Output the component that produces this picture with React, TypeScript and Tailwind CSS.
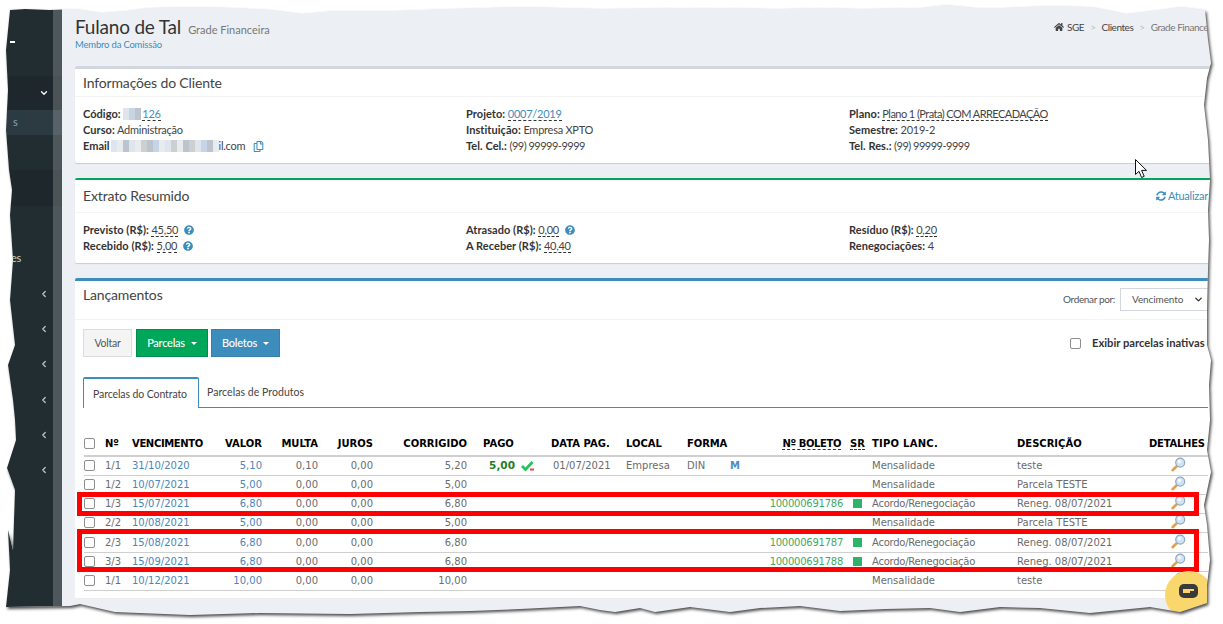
import React from "react";
import { ChevronDown, ChevronLeft } from "lucide-react";
import { FaHome, FaSyncAlt, FaQuestionCircle, FaRegCopy } from "react-icons/fa";

const edge =
  "10,10 25,9 50,10 75,9 100,13 125,11 147,8 190,7 233,8 270,10 300,14 333,11 393,11 450,9 520,7 600,9 700,8 780,9 820,8 860,9 920,8 945,5 975,8 1000,8 1050,6 1090,7 1125,14 1150,11 1180,7 1205,10 1208,40 1211,63 1207,78 1204,105 1208,140 1210,180 1208,210 1209,240 1208,270 1207,310 1207,345 1211,360 1209,385 1210,420 1207,450 1211,472 1204,505 1207,525 1210,560 1207,585 1207,603 1180,612 1150,607 1090,613 1040,608 1000,607 960,612 930,608 885,609 840,611 800,606 760,608 730,612 690,607 655,612 640,608 615,612 600,610 580,606 520,609 470,611 420,612 350,614 260,613 190,615 115,612 80,604 70,606 6,607 10,570 8,530 13,550 14,520 15,490 7,468 16,440 15,420 13,400 8,365 15,345 10,300 13,260 10,215 12,190 9,170 6,130 8,90 6,50";
const outside = `M0 0H1223V624H0Z M${edge.replace(/ /g, " L")}Z`;

function TornEdge() {
  return (
    <svg className="absolute inset-0 pointer-events-none" width="1223" height="624" viewBox="0 0 1223 624">
      <defs>
        <filter id="tornBlur" x="-5%" y="-5%" width="110%" height="110%">
          <feGaussianBlur stdDeviation="1.6" />
        </filter>
        <clipPath id="tornClip">
          <path d={outside} clipRule="evenodd" />
        </clipPath>
      </defs>
      <path d={outside} fill="#fff" fillRule="evenodd" />
      <g clipPath="url(#tornClip)">
        <polygon points={edge} fill="#4a4a4a" transform="translate(1.5 2)" filter="url(#tornBlur)" />
      </g>
    </svg>
  );
}

function Mosaic({ cells }: { cells: string[] }) {
  return (
    <span className="inline-flex h-[12px] align-[-2px] blur-[0.6px]">
      {cells.map((c, i) => (
        <span key={i} className={`w-[6px] h-full ${c}`} />
      ))}
    </span>
  );
}

const m1 = "bg-[#c6d5e6]";
const m2 = "bg-[#dfe5ec]";
const m3 = "bg-[#bcc4cd]";
const m4 = "bg-[#e9ecef]";
const m5 = "bg-[#cdcfd1]";

function Dashed({ children, blue, tight }: { children: React.ReactNode; blue?: boolean; tight?: boolean }) {
  return (
    <span className={`border-b border-dashed border-[#333] ${tight ? "tracking-[-0.55px]" : ""} ${blue ? "text-[#3c8dbc]" : "text-[#444]"}`}>{children}</span>
  );
}

function Field({ label, children }: { label: string; children: React.ReactNode }) {
  return (
    <div className="h-4 leading-4 whitespace-nowrap">
      <b className="font-bold text-[#333] tracking-[0.05px]">{label}</b> {children}
    </div>
  );
}

function Phone() {
  return <span className="tracking-[-0.5px]">(99) 99999-9999</span>;
}

function Help() {
  return <FaQuestionCircle className="inline ml-[6px] text-[#3c8dbc] align-[-1px]" size={10} />;
}

function Magnifier() {
  return (
    <svg width="15" height="15" viewBox="0 0 15 15" className="block mx-auto -translate-y-px">
      <path d="M6.2 8.8 L1.6 13.2" stroke="#e0a050" strokeWidth="2.6" strokeLinecap="round" />
      <circle cx="9.2" cy="5.6" r="4.5" fill="#cfe3f5" stroke="#8fa9bd" strokeWidth="1.2" />
      <circle cx="8.4" cy="4.6" r="1.8" fill="#f2f8fd" />
    </svg>
  );
}

function Check() {
  return <span className="block w-[11px] h-[11px] rounded-[2px] border border-[#8f8f8f] bg-white" />;
}

type Row = {
  h: string;
  n: string;
  v: string;
  val: string;
  mu: string;
  co: string;
  tipo: string;
  desc: string;
  boleto?: string;
  paid?: boolean;
};

const rows: Row[] = [
  { h: "h-[19px]", n: "1/1", v: "31/10/2020", val: "5,10", mu: "0,10", co: "5,20", tipo: "Mensalidade", desc: "teste", paid: true },
  { h: "h-[19px]", n: "1/2", v: "10/07/2021", val: "5,00", mu: "0,00", co: "5,00", tipo: "Mensalidade", desc: "Parcela TESTE" },
  { h: "h-[19px]", n: "1/3", v: "15/07/2021", val: "6,80", mu: "0,00", co: "6,80", tipo: "Acordo/Renegociação", desc: "Reneg. 08/07/2021", boleto: "100000691786" },
  { h: "h-[19px]", n: "2/2", v: "10/08/2021", val: "5,00", mu: "0,00", co: "5,00", tipo: "Mensalidade", desc: "Parcela TESTE" },
  { h: "h-[20px]", n: "2/3", v: "15/08/2021", val: "6,80", mu: "0,00", co: "6,80", tipo: "Acordo/Renegociação", desc: "Reneg. 08/07/2021", boleto: "100000691787" },
  { h: "h-[19px]", n: "3/3", v: "15/09/2021", val: "6,80", mu: "0,00", co: "6,80", tipo: "Acordo/Renegociação", desc: "Reneg. 08/07/2021", boleto: "100000691788" },
  { h: "h-[19px]", n: "1/1", v: "10/12/2021", val: "10,00", mu: "0,00", co: "10,00", tipo: "Mensalidade", desc: "teste" },
];

function Table() {
  const th = "p-0 font-bold text-black text-left whitespace-nowrap";
  return (
    <table className="table-fixed w-[1124px] border-collapse font-['DejaVu_Sans',sans-serif] text-[10px] text-[#6b6b6b] ml-px">
      <colgroup>
        <col className="w-[21px]" />
        <col className="w-[27px]" />
        <col className="w-[76px]" />
        <col className="w-[54px]" />
        <col className="w-[56px]" />
        <col className="w-[55px]" />
        <col className="w-[94px]" />
        <col className="w-[84px]" />
        <col className="w-[75px]" />
        <col className="w-[61px]" />
        <col className="w-[67px]" />
        <col className="w-[89px]" />
        <col className="w-[29px]" />
        <col className="w-[145px]" />
        <col className="w-[132px]" />
        <col className="w-[59px]" />
      </colgroup>
      <thead>
        <tr className="h-[24px] border-b-2 border-[#cfcfcf]">
          <th className={th}><Check /></th>
          <th className={th}>Nº</th>
          <th className={`${th} tracking-[-0.35px]`}>VENCIMENTO</th>
          <th className={`${th} !text-right`}>VALOR</th>
          <th className={`${th} !text-right`}>MULTA</th>
          <th className={`${th} !text-right`}>JUROS</th>
          <th className={`${th} !text-right`}>CORRIGIDO</th>
          <th className={`${th} pl-4`}>PAGO</th>
          <th className={th}>DATA PAG.</th>
          <th className={th}>LOCAL</th>
          <th className={`${th} tracking-[-0.1px]`}>FORMA</th>
          <th className={`${th} !text-right tracking-[-0.4px]`}>
            <span className="border-b border-dashed border-[#333] mr-[2px]">Nº BOLETO</span>
          </th>
          <th className={`${th} pl-[7px]`}>
            <span className="border-b border-dashed border-[#333]">SR</span>
          </th>
          <th className={`${th} tracking-[0.25px]`}>TIPO LANC.</th>
          <th className={th}>DESCRIÇÃO</th>
          <th className={`${th} tracking-[-0.25px]`}>DETALHES</th>
        </tr>
      </thead>
      <tbody>
        {rows.map((r, i) => (
          <tr key={i} className={`${r.h} border-b border-[#cfcfcf]`}>
            <td className="p-0"><Check /></td>
            <td className="p-0">{r.n}</td>
            <td className="p-0 text-[#4a86b8]">{r.v}</td>
            <td className="p-0 text-right text-[#4a86b8]">{r.val}</td>
            <td className="p-0 text-right">{r.mu}</td>
            <td className="p-0 text-right">0,00</td>
            <td className="p-0 text-right">{r.co}</td>
            <td className="p-0">
              {r.paid && (
                <span className="flex items-center">
                  <b className="w-[48px] text-right text-[#1e7d1e] text-[10.5px]">5,00</b>
                  <svg width="13" height="10" viewBox="0 0 13 10" className="ml-[6px]">
                    <path d="M1 5 L4.5 8.5 L11.5 1" fill="none" stroke="#22c55e" strokeWidth="2.8" />
                    <rect x="9" y="7.5" width="4" height="2" fill="#e5484d" />
                  </svg>
                </span>
              )}
            </td>
            <td className="p-0 pl-[2px]">{r.paid ? "01/07/2021" : ""}</td>
            <td className="p-0">{r.paid ? "Empresa" : ""}</td>
            <td className="p-0">
              {r.paid && (
                <span className="flex">
                  <span className="w-[43px]">DIN</span>
                  <b className="text-[#4a8ec0]">M</b>
                </span>
              )}
            </td>
            <td className="p-0 text-right text-[#3fa866] tracking-[-0.25px]">{r.boleto}</td>
            <td className="p-0 pl-[10px]">
              {r.boleto && <span className="block w-[9px] h-[9px] bg-[#2fb36a]" />}
            </td>
            <td className={`p-0 whitespace-nowrap ${r.boleto ? "tracking-[-0.25px]" : ""}`}>{r.tipo}</td>
            <td className="p-0 whitespace-nowrap">{r.desc}</td>
            <td className="p-0"><Magnifier /></td>
          </tr>
        ))}
      </tbody>
    </table>
  );
}

function Sidebar() {
  const chev = "h-[35.3px] flex items-center justify-end pr-[13px]";
  return (
    <aside className="relative w-[62px] shrink-0 bg-[#222d32] text-[#b8c7ce] text-[11px]">
      <div className="h-[76px] pt-[41px] pl-[10px]">
        <div className="w-[5px] h-[1.5px] bg-white" />
      </div>
      <div className="h-[34px] bg-[#1e282c] flex items-center justify-end pr-[13px]">
        <ChevronDown size={10} strokeWidth={3} className="text-white" />
      </div>
      <div className="h-[25px] bg-[#2c3b41] flex items-center pl-[13px] text-[#8aa4af]">s</div>
      <div className="h-[35px]" />
      <div className="h-[36px] bg-[#1e282c]" />
      <div className="h-[35px]" />
      <div className="h-[35px] flex items-center pl-[11px] text-[#c9d2b8]">es</div>
      {[0, 1, 2, 3, 4, 5].map((i) => (
        <div key={i} className={chev}>
          <ChevronLeft size={10} strokeWidth={3} />
        </div>
      ))}
      <div className="absolute top-0 bottom-0 right-0 w-[9px] bg-white/20" />
    </aside>
  );
}

function BoxTitle({ children }: { children: React.ReactNode }) {
  return <h3 className="text-[14px] leading-none text-[#444] tracking-[-0.15px]">{children}</h3>;
}

export default function App() {
  return (
    <div className="relative w-[1223px] h-[624px] overflow-hidden flex bg-[#ecf0f5] font-['Lato',sans-serif] text-[11px] tracking-[-0.25px] text-[#444]">
      <Sidebar />
      <main className="flex-1 min-w-0 pl-[13px]">
        <header className="h-[66px] pt-[17px] flex justify-between">
          <div>
            <div className="flex items-baseline">
              <h1 className="text-[19px] leading-[20px] text-[#333] tracking-[-0.2px]">Fulano de Tal</h1>
              <span className="ml-[7px] text-[11px] tracking-normal text-[#777]">Grade Financeira</span>
            </div>
            <a className="block text-[9.5px] leading-[12px] tracking-[-0.2px] text-[#3c8dbc]">Membro da Comissão</a>
          </div>
          <div className="w-[169px] flex items-center h-[20px] text-[10px] tracking-[-0.45px] text-[#444] whitespace-nowrap shrink-0">
            <FaHome size={10} className="mr-[3px] shrink-0" />
            <span>SGE</span>
            <span className="mx-[6px] text-[#bbb]">&gt;</span>
            <span>Clientes</span>
            <span className="mx-[6px] text-[#bbb]">&gt;</span>
            <span className="text-[#777]">Grade Financeira</span>
          </div>
        </header>

        <section className="h-[97px] bg-white border-t-[3px] border-[#d2d6de] rounded-[2px] shadow-[0_1px_1px_rgba(0,0,0,0.15)]">
          <div className="h-[28px] pl-2 flex items-center border-b border-[#f4f4f4]"><BoxTitle>Informações do Cliente</BoxTitle></div>
          <div className="pl-2 pt-[9px] grid grid-cols-[383px_383px_1fr]">
            <div>
              <Field label="Código:">
                <Mosaic cells={[m2, m1, m3]} />
                <span className="ml-px border-b border-dashed border-[#333] text-[#3c8dbc]">126</span>
              </Field>
              <Field label="Curso:">Administração</Field>
              <div className="h-4 leading-4 whitespace-nowrap flex items-center">
                <b className="font-bold text-[#333] tracking-normal">Email</b>
                <span className="ml-px flex"><Mosaic cells={[m2, m4, m3, m2, m4, m5, m3, m1, m4, m2, m5, m4, m3, m5, m2, m1, m3, m4]} /></span>
                <span>il.com</span>
                <FaRegCopy size={11} className="ml-2 text-[#3c8dbc]" />
              </div>
            </div>
            <div>
              <Field label="Projeto:"><Dashed blue>0007/2019</Dashed></Field>
              <Field label="Instituição:">Empresa XPTO</Field>
              <Field label="Tel. Cel.:"><Phone /></Field>
            </div>
            <div>
              <Field label="Plano:"><Dashed tight>Plano 1 (Prata) COM ARRECADAÇÃO</Dashed></Field>
              <Field label="Semestre:">2019-2</Field>
              <Field label="Tel. Res.:"><Phone /></Field>
            </div>
          </div>
        </section>

        <section className="mt-[15px] h-[85px] bg-white border-t-[2px] border-[#00a65a] rounded-[2px] shadow-[0_1px_1px_rgba(0,0,0,0.15)]">
          <div className="h-[33px] pl-2 pr-[15px] flex items-center justify-between border-b border-[#f4f4f4]">
            <BoxTitle>Extrato Resumido</BoxTitle>
            <a className="flex items-center text-[11px] text-[#3c8dbc]"><FaSyncAlt size={10} className="mr-[2px]" />Atualizar</a>
          </div>
          <div className="pl-2 pt-[9px] grid grid-cols-[383px_383px_1fr]">
            <div>
              <Field label="Previsto (R$):"><Dashed>45,50</Dashed><Help /></Field>
              <Field label="Recebido (R$):"><Dashed>5,00</Dashed><Help /></Field>
            </div>
            <div>
              <Field label="Atrasado (R$):"><Dashed>0,00</Dashed><Help /></Field>
              <Field label="A Receber (R$):"><Dashed>40,40</Dashed></Field>
            </div>
            <div>
              <Field label="Resíduo (R$):"><Dashed>0,20</Dashed></Field>
              <Field label="Renegociações:">4</Field>
            </div>
          </div>
        </section>

        <section className="mt-[15px] h-[321px] bg-white border-t-[3px] border-[#3c8dbc] rounded-[2px] border-b border-b-[#ececec]">
          <div className="h-[39px] pl-2 flex justify-between border-b border-[#f4f4f4]">
            <div className="pt-[7px]"><BoxTitle>Lançamentos</BoxTitle></div>
            <div className="flex items-start pt-[7px]">
              <span className="text-[10px] leading-[23px] tracking-[-0.35px] text-[#555] mr-[5px]">Ordenar por:</span>
              <div className="w-[103px] h-[23px] border border-[#d2d6de] flex items-center pl-[11px] text-[10px] tracking-[-0.1px] text-[#555]">
                Vencimento
                <ChevronDown size={11} strokeWidth={3} className="ml-[10px] text-[#333]" />
              </div>
            </div>
          </div>
          <div className="pl-2 pt-[9px] flex justify-between">
            <div className="flex gap-[3px]">
              <button className="w-[49px] h-[28px] mr-px pt-[2px] bg-[#f4f4f4] border border-[#ddd] text-[10.5px] text-[#555]">Voltar</button>
              <button className="w-[72px] h-[28px] bg-[#00a65a] border border-[#008d4c] text-[11px] font-medium text-white flex items-center justify-center">
                Parcelas<span className="ml-[6px] border-x-[3.5px] border-x-transparent border-t-[3.5px] border-t-white" />
              </button>
              <button className="w-[69px] h-[28px] bg-[#3c8dbc] border border-[#367fa9] text-[11px] font-medium text-white flex items-center justify-center">
                Boletos<span className="ml-[6px] border-x-[3.5px] border-x-transparent border-t-[3.5px] border-t-white" />
              </button>
            </div>
            <div className="w-[153px] flex items-center h-[28px] font-bold tracking-normal text-[#333] text-[11.2px] whitespace-nowrap">
              <Check />
              <span className="ml-[11px]">Exibir parcelas inativas</span>
            </div>
          </div>
          <div className="ml-2 mt-[20px] w-[1125px] h-[31px] flex border-b border-[#3c8dbc] text-[10.5px] tracking-[-0.1px]">
            <div className="w-[116px] h-[31px] pt-[2px] pr-[2px] bg-white border border-b-0 border-[#3c8dbc] border-t-2 rounded-t-[2px] flex items-center justify-center text-[#444] relative">
              Parcelas do Contrato
            </div>
            <div className="ml-2 h-[30px] pt-[2px] tracking-[0.05px] flex items-center text-[#444]">Parcelas de Produtos</div>
          </div>
          <div className="mt-[24px] ml-2 tracking-normal">
            <Table />
          </div>
        </section>
      </main>

      <div className="absolute left-[77px] top-[492px] w-[1122px] h-[24px] border-[5px] border-[#ff0000]" />
      <div className="absolute left-[77px] top-[529px] w-[1122px] h-[43px] border-[5px] border-[#ff0000]" />

      <div className="absolute left-[1165px] top-[571px] w-[48px] h-[48px] rounded-full bg-[#fad76c] flex items-center justify-center">
        <svg width="19" height="14" viewBox="0 0 19 14" className="mb-[8px] mr-[1px]">
          <rect x="0" y="0" width="19" height="14" rx="5" fill="#3a3a3a" />
          <rect x="4" y="5" width="11" height="2" fill="#fad76c" />
          <rect x="4" y="7" width="7" height="2" fill="#fad76c" />
        </svg>
      </div>

      <svg className="absolute left-[1135px] top-[159px]" width="13" height="20" viewBox="0 0 13 20">
        <path d="M0.5 0.5V15.5L4 12.3L6.6 18.5L9.2 17.3L6.6 11.4H11.5Z" fill="#fff" stroke="#111" strokeWidth="1" />
      </svg>

      <TornEdge />
    </div>
  );
}
